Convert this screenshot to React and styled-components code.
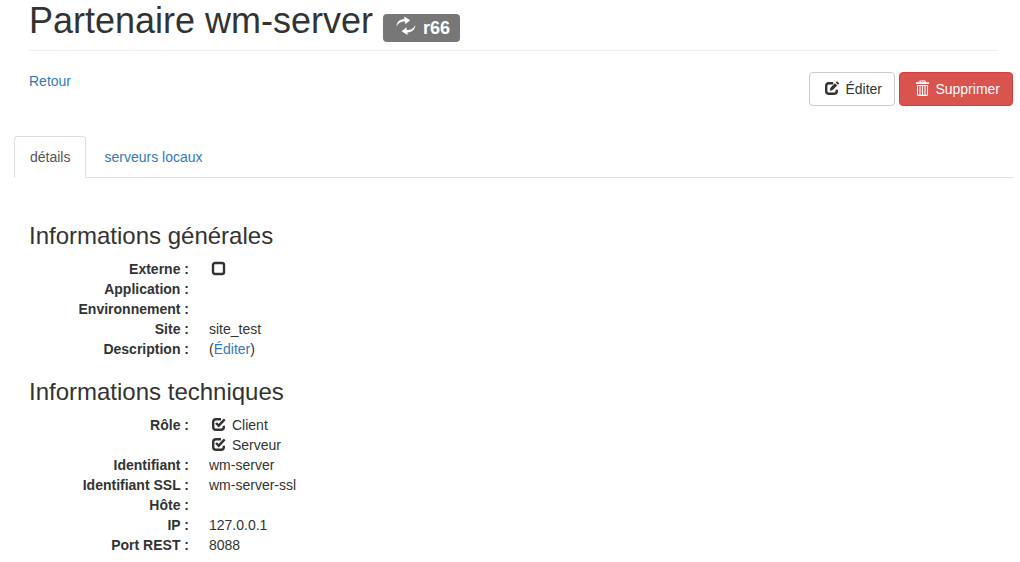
import React from "react";
import styled, { createGlobalStyle } from "styled-components";


const general = [
    { label: 'Externe', checks: [{ id: 'externe', checked: false }] },
    { label: 'Application' },
    { label: 'Environnement' },
    { label: 'Site', value: 'site_test' },
    { label: 'Description', editable: true },
]

const technical = [
    {
        label: 'Rôle',
        checks: [
            { id: 'client', text: 'Client', checked: true },
            { id: 'serveur', text: 'Serveur', checked: true },
        ]
    },
    { label: 'Identifiant', value: 'wm-server' },
    { label: 'Identifiant SSL', value: 'wm-server-ssl' },
    { label: 'Hôte' },
    { label: 'IP', value: '127.0.0.1' },
    { label: 'Port REST', value: '8088' },
]

const SyncIcon = () => (
    <BadgeIcon viewBox="0 0 25 20" aria-hidden="true">
        <path d="M3.5 10.6C3.7 6.200 6.500 3.300 11.300 3.100V0.600L17.200 4.200L12.200 8.200V5.500C8 5.500 5.500 6.800 3.500 10.600Z" />
        <path d="M22.300 8.900C22.100 13.300 19.300 16.200 14.500 16.400V18.900L8.600 15.300L13.600 11.300V14C17.800 14 20.300 12.700 22.300 8.900Z" />
    </BadgeIcon>
)

const EditIcon = () => (
    <Icon viewBox="0 0 19 16" aria-hidden="true">
        <path d="M11.200 3.200H7Q4.200 3.200 4.200 6V11Q4.200 13.800 7 13.800H12Q14.800 13.800 14.800 11V9.800" fill="none" stroke="currentColor" strokeWidth="2.400" />
        <path d="M7.700 10.800L8.400 7.700L12.900 3.200L15.200 5.500L10.700 10Z M13.700 2.500L15 1.200L17.300 3.400L16 4.700Z" />
    </Icon>
)

const TrashIcon = () => (
    <Icon viewBox="0 0 19 16" aria-hidden="true">
        <path d="M8 2.500V1H13V2.500" fill="none" stroke="currentColor" strokeWidth="1.200" />
        <path d="M4 2.200H17V4H4Z" />
        <path d="M5.500 5V14.400Q5.500 15.400 6.500 15.400H14.500Q15.500 15.400 15.500 14.400V5M8 5V15M10.500 5V15M13 5V15M5 5.500H16" fill="none" stroke="currentColor" strokeWidth="1.100" />
    </Icon>
)

const CheckIcon = ({ checked }) => (
    <Icon viewBox="0 0 19 16" aria-hidden="true">
        {checked ? (
            <>
                <path d="M12 3.200H7Q4.200 3.200 4.200 6V11Q4.200 13.800 7 13.800H12Q14.800 13.800 14.800 11V9.800" fill="none" stroke="currentColor" strokeWidth="2.400" />
                <path d="M7 7L9.700 9.700L15.700 3.400" fill="none" stroke="currentColor" strokeWidth="2.400" />
            </>
        ) : (
            <rect x="4" y="3" width="11" height="11" rx="2" fill="none" stroke="currentColor" strokeWidth="2.400" />
        )}
    </Icon>
)

const Details = ({ title, rows }) => (
    <Section>
        <h3>{title}</h3>
        <List>
            {rows.map((row) => (
                <React.Fragment key={row.label}>
                    <dt>{row.label} :</dt>
                    {row.checks ? row.checks.map((check) => (
                        <dd key={check.id}>
                            <CheckLabel htmlFor={check.id}>
                                <input
                                    type="checkbox"
                                    id={check.id}
                                    aria-label={check.text || row.label}
                                    checked={check.checked}
                                    readOnly
                                />
                                <CheckIcon checked={check.checked} />
                                {check.text}
                            </CheckLabel>
                        </dd>
                    )) : (
                        <dd>
                            {row.value}
                            {row.editable && <>(<Link href="#description">Éditer</Link>)</>}
                        </dd>
                    )}
                </React.Fragment>
            ))}
        </List>
    </Section>
)

const App = () => {
    return (
        <>
            <GlobalStyle />
            <Page>
                <Header>
                    <h1>
                        Partenaire wm-server <Badge><SyncIcon />r66</Badge>
                    </h1>
                </Header>
                <Toolbar>
                    <BackLink href="#partenaires">Retour</BackLink>
                    <Actions>
                        <Button type="button"><EditIcon />Éditer</Button>
                        <Button type="button" $danger><TrashIcon />Supprimer</Button>
                    </Actions>
                </Toolbar>
                <Tabs>
                    <li><Tab href="#details" $active>détails</Tab></li>
                    <li><Tab href="#serveurs">serveurs locaux</Tab></li>
                </Tabs>
                <Content>
                    <Details title="Informations générales" rows={general} />
                    <Details title="Informations techniques" rows={technical} />
                </Content>
            </Page>
        </>
    );
}

const GlobalStyle = createGlobalStyle`
    * {
        box-sizing: border-box;
    }
    body {
        margin: 0;
        background-color: #fff;
        color: #333;
        font-family: "Liberation Sans", Arial, sans-serif;
        font-size: 14px;
        line-height: 20px;
    }
`;

const Page = styled.div`
    padding: 1px 7px 0 14px;
`;

const Header = styled.header`
    margin: 0 15px;
    padding-bottom: 8px;
    border-bottom: 1px solid #eee;
    h1 {
        margin: 0;
        font-size: 36px;
        font-weight: 500;
        line-height: 40px;
    }
`;

const Badge = styled.span`
    display: inline-block;
    padding: 5px 10px;
    border-radius: 4px;
    background-color: #777;
    color: #fff;
    font-size: 18px;
    font-weight: 700;
    line-height: 18px;
    vertical-align: -1px;
`;

const Icon = styled.svg`
    flex: none;
    width: 19px;
    height: 16px;
    margin: 0 4px 2px 0;
    fill: currentColor;
`;

const BadgeIcon = styled(Icon)`
    width: 25px;
    height: 20px;
    margin: -4px 5px -4px 0;
    vertical-align: 2px;
`;

const Toolbar = styled.div`
    display: flex;
    justify-content: space-between;
    align-items: flex-start;
    margin-top: 21px;
    padding-left: 15px;
`;

const Link = styled.a`
    color: #337ab7;
    text-decoration: none;
    &:hover {
        text-decoration: underline;
    }
`;

const BackLink = styled(Link)`
    line-height: 18px;
`;

const Actions = styled.div`
    display: flex;
    gap: 4px;
`;

const Button = styled.button`
    display: flex;
    align-items: center;
    min-width: 86px;
    padding: 6px 12px;
    border: 1px solid ${({ $danger }) => ($danger ? '#d43f3a' : '#ccc')};
    border-radius: 4px;
    background-color: ${({ $danger }) => ($danger ? '#d9534f' : '#fff')};
    color: ${({ $danger }) => ($danger ? '#fff' : '#333')};
    font: inherit;
    cursor: pointer;
`;

const Tabs = styled.ul`
    display: flex;
    gap: 2px;
    margin: 30px 0 0;
    padding: 0;
    border-bottom: 1px solid #ddd;
    list-style: none;
    li {
        margin-bottom: -1px;
    }
`;

const Tab = styled.a`
    display: block;
    padding: 10px 15px;
    border: 1px solid ${({ $active }) => ($active ? '#ddd' : 'transparent')};
    border-bottom-color: ${({ $active }) => ($active ? '#fff' : 'transparent')};
    border-radius: 4px 4px 0 0;
    background-color: ${({ $active }) => ($active ? '#fff' : 'transparent')};
    color: ${({ $active }) => ($active ? '#555' : '#337ab7')};
    text-decoration: none;
`;

const Content = styled.main`
    padding: 45px 15px 0;
`;

const Section = styled.section`
    margin-bottom: 20px;
    &:last-child {
        margin-bottom: 0;
    }
    h3 {
        margin: 0 0 10px;
        font-size: 24px;
        font-weight: 500;
        line-height: 26px;
    }
`;

const List = styled.dl`
    display: grid;
    grid-template-columns: 160px 1fr;
    column-gap: 20px;
    grid-auto-rows: minmax(20px, auto);
    margin: 0;
    dt {
        grid-column: 1;
        font-weight: 700;
        text-align: right;
    }
    dd {
        grid-column: 2;
        margin: 0;
    }
`;

const CheckLabel = styled.label`
    position: relative;
    display: inline-flex;
    align-items: center;
    height: 20px;
    vertical-align: top;
    input {
        position: absolute;
        left: 0;
        width: 16px;
        height: 16px;
        margin: 0;
        opacity: 0;
    }
`;

export default App;
